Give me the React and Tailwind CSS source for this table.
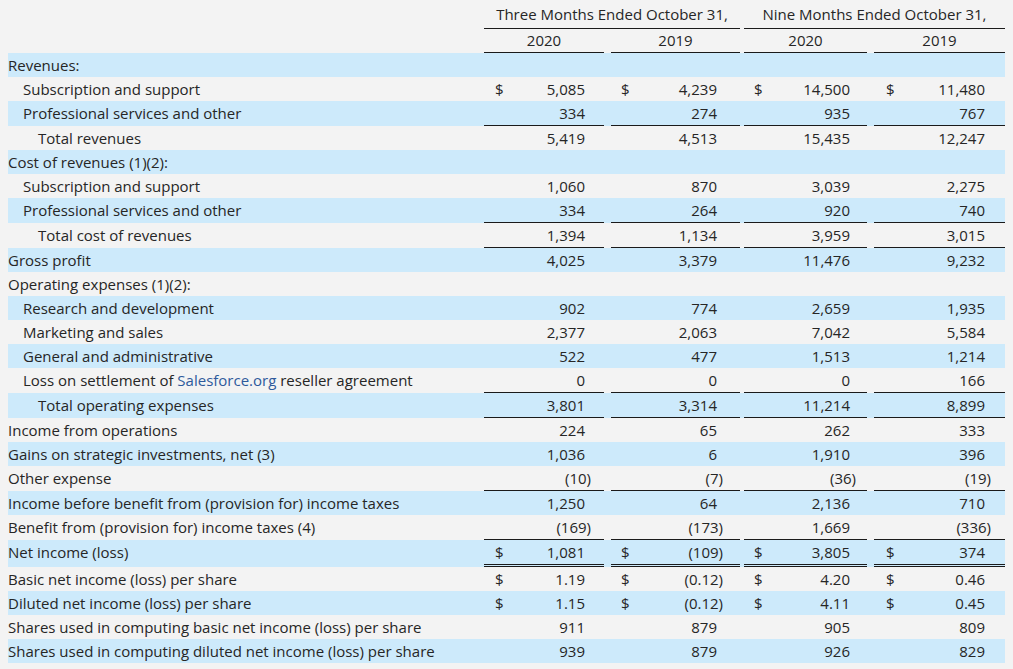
const groups = [
  { w: 'w-[120px]', pl: 'pl-[11px]', pr: 'pr-[19px]' },
  { w: 'w-[129px]', pl: 'pl-[10px]', pr: 'pr-[23px]' },
  { w: 'w-[123px]', pl: 'pl-[10px]', pr: 'pr-[17px]' },
  { w: 'w-[131px]', pl: 'pl-[12px]', pr: 'pr-[20px]' },
];
const gaps = ['ml-[7px]', 'ml-[4px]', 'ml-[7px]'];

const rows = [
  { label: 'Revenues:', indent: 0 },
  { label: 'Subscription and support', indent: 1, values: ['5,085', '4,239', '14,500', '11,480'], dollar: true },
  { label: 'Professional services and other', indent: 1, values: ['334', '274', '935', '767'], line: 'single' },
  { label: 'Total revenues', indent: 2, values: ['5,419', '4,513', '15,435', '12,247'] },
  { label: 'Cost of revenues (1)(2):', indent: 0 },
  { label: 'Subscription and support', indent: 1, values: ['1,060', '870', '3,039', '2,275'] },
  { label: 'Professional services and other', indent: 1, values: ['334', '264', '920', '740'], line: 'single' },
  { label: 'Total cost of revenues', indent: 2, values: ['1,394', '1,134', '3,959', '3,015'], line: 'single' },
  { label: 'Gross profit', indent: 0, values: ['4,025', '3,379', '11,476', '9,232'] },
  { label: 'Operating expenses (1)(2):', indent: 0 },
  { label: 'Research and development', indent: 1, values: ['902', '774', '2,659', '1,935'] },
  { label: 'Marketing and sales', indent: 1, values: ['2,377', '2,063', '7,042', '5,584'] },
  { label: 'General and administrative', indent: 1, values: ['522', '477', '1,513', '1,214'] },
  { label: 'loss', indent: 1, values: ['0', '0', '0', '166'], line: 'single' },
  { label: 'Total operating expenses', indent: 2, values: ['3,801', '3,314', '11,214', '8,899'], line: 'single' },
  { label: 'Income from operations', indent: 0, values: ['224', '65', '262', '333'] },
  { label: 'Gains on strategic investments, net (3)', indent: 0, values: ['1,036', '6', '1,910', '396'] },
  { label: 'Other expense', indent: 0, values: ['(10)', '(7)', '(36)', '(19)'], line: 'single' },
  { label: 'Income before benefit from (provision for) income taxes', indent: 0, values: ['1,250', '64', '2,136', '710'] },
  { label: 'Benefit from (provision for) income taxes (4)', indent: 0, values: ['(169)', '(173)', '1,669', '(336)'], line: 'single' },
  { label: 'Net income (loss)', indent: 0, values: ['1,081', '(109)', '3,805', '374'], dollar: true, line: 'double' },
  { label: 'Basic net income (loss) per share', indent: 0, values: ['1.19', '(0.12)', '4.20', '0.46'], dollar: true },
  { label: 'Diluted net income (loss) per share', indent: 0, values: ['1.15', '(0.12)', '4.11', '0.45'], dollar: true },
  { label: 'Shares used in computing basic net income (loss) per share', indent: 0, values: ['911', '879', '905', '809'] },
  { label: 'Shares used in computing diluted net income (loss) per share', indent: 0, values: ['939', '879', '926', '829'] },
];

const indents = ['pl-0', 'pl-[15px]', 'pl-[30px]'];

function Value({ v }) {
  if (v.startsWith('(')) {
    return (
      <span>
        {v.slice(0, -1)}
        <span className="-mr-[6px]">)</span>
      </span>
    );
  }
  return <span>{v}</span>;
}

function Row({ row, blue }) {
  const h =
    row.line === 'single' ? 'h-[25px] border-b border-[#1a1a1a]' : row.line === 'double' ? 'h-[27px] border-b-[3px] border-double border-[#1a1a1a]' : 'h-[24px]';
  return (
    <div className={`flex items-start ${blue ? 'bg-[#cdeafb]' : ''}`}>
      <div className={`w-[476px] shrink-0 whitespace-nowrap h-[24px] flex items-center ${indents[row.indent]}`}>
        {row.label === 'loss' ? (
          <span>
            Loss on settlement of <span className="text-[#2e5a9c]">Salesforce.org</span> reseller agreement
          </span>
        ) : (
          row.label
        )}
      </div>
      {groups.map((g, i) => (
        <div
          key={i}
          className={`${g.w} shrink-0 ${i > 0 ? gaps[i - 1] : ''} ${h} flex items-start justify-between ${g.pl} ${g.pr}`}
        >
          <span className="h-[24px] flex items-center">{row.dollar ? '$' : ''}</span>
          <span className="h-[24px] flex items-center">{row.values ? <Value v={row.values[i]} /> : null}</span>
        </div>
      ))}
    </div>
  );
}

export default function App() {
  return (
    <div className="w-full h-[669px] bg-[#f3f3f3] px-2 text-[15px] text-[#262626] overflow-hidden" style={{ fontFamily: '"Open Sans", sans-serif' }}>
      <div className="flex h-[29px]">
        <div className="w-[476px] shrink-0" />
        <div className="w-[256px] shrink-0 border-b border-[#1a1a1a] flex items-center justify-center">Three Months Ended October 31,</div>
        <div className="w-[261px] shrink-0 ml-[4px] border-b border-[#1a1a1a] flex items-center justify-center">Nine Months Ended October 31,</div>
      </div>
      <div className="flex h-[24px]">
        <div className="w-[476px] shrink-0" />
        {groups.map((g, i) => (
          <div key={i} className={`${g.w} shrink-0 ${i > 0 ? gaps[i - 1] : ''} border-b border-[#1a1a1a] flex items-center justify-center`}>
            {i % 2 === 0 ? '2020' : '2019'}
          </div>
        ))}
      </div>
      {rows.map((r, i) => (
        <Row key={i} row={r} blue={i % 2 === 0} />
      ))}
    </div>
  );
}
